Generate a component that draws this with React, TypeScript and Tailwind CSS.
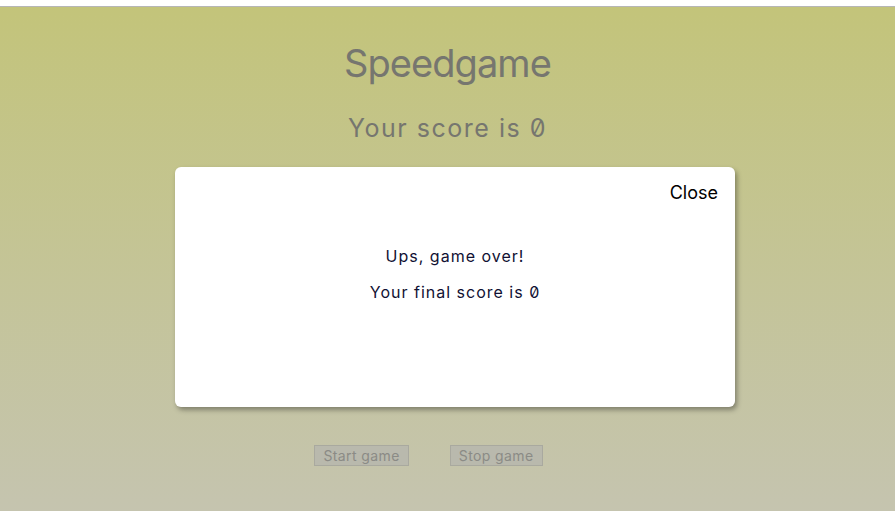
export default function App() {
  return (
    <div className="min-h-[511px] w-full flex flex-col font-['Inter','Noto_Sans',sans-serif] slashed-zero">
      {/* top strip */}
      <div className="h-[6px] bg-white" />
      <div className="h-px bg-[#b6b6b6]" />

      <main className="flex-1 flex flex-col items-center bg-gradient-to-b from-[#c3c47a] to-[#c5c4af] pb-[44px]">
        <h1 className="mt-[33px] text-[38px] leading-[46px] text-[#76766f] tracking-tight">Speedgame</h1>
        <h2 className="mt-[26px] text-[25px] leading-[32px] text-[#76766f] tracking-[1.5px]">Your score is 0</h2>

        {/* modal */}
        <div className="mt-[23px] ml-[15px] w-[560px] h-[240px] bg-white rounded-md shadow-[2px_3px_5px_rgba(0,0,0,0.35)] flex flex-col px-[17px] pt-[14px]">
          <div className="flex justify-end">
            <button className="text-[18px] leading-6 text-black">Close</button>
          </div>
          <div className="flex flex-col items-center mt-[40px] gap-[13px] text-[16px] leading-[23px] text-[#111133] tracking-[1px]">
            <p>Ups, game over!</p>
            <p>Your final score is 0</p>
          </div>
        </div>

        {/* buttons */}
        <div className="mt-[38px] mr-[38px] flex gap-[41px]">
          <button className="h-[21px] px-[8px] border border-[#a9a99f] bg-[#b9b9ad] text-[14px] leading-4 tracking-[0.4px] text-[#8b8b86]">Start game</button>
          <button className="h-[21px] px-[8px] border border-[#a9a99f] bg-[#b9b9ad] text-[14px] leading-4 tracking-[0.4px] text-[#8b8b86]">Stop game</button>
        </div>
      </main>
    </div>
  );
}
